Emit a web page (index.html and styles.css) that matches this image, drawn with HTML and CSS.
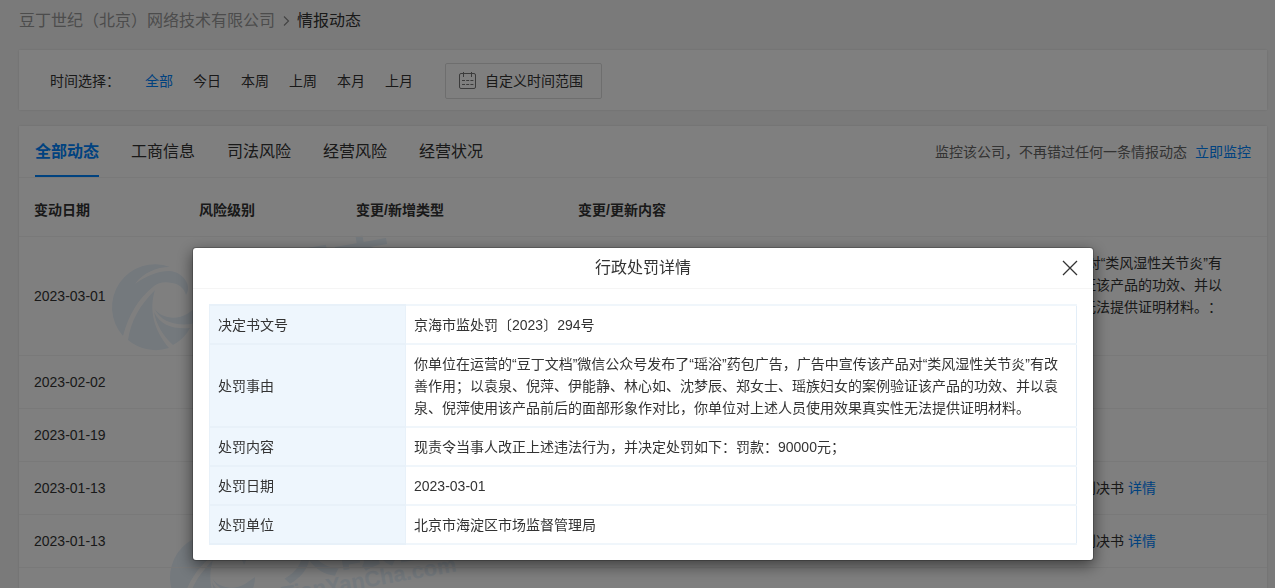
FILE: index.html
```
<!DOCTYPE html>
<html lang="zh-CN">
<head>
<meta charset="utf-8">
<title>情报动态</title>
<link rel="stylesheet" href="styles.css">
</head>
<body>
<main class="page">
  <nav class="crumbs">
    <a class="crumb-link" href="#">豆丁世纪（北京）网络技术有限公司</a>
    <svg class="crumb-sep" width="8" height="12" viewBox="0 0 8 12"><path d="M2 1.5 6.5 6 2 10.5" fill="none" stroke="currentColor" stroke-width="1.2"/></svg>
    <span>情报动态</span>
  </nav>

  <section class="card filter">
    <span class="filter-label">时间选择：</span>
    <div class="filter-options">
      <a class="option active" href="#">全部</a>
      <a class="option" href="#">今日</a>
      <a class="option" href="#">本周</a>
      <a class="option" href="#">上周</a>
      <a class="option" href="#">本月</a>
      <a class="option" href="#">上月</a>
    </div>
    <button class="range" type="button">
      <svg width="18" height="18" viewBox="0 0 18 18" fill="none" stroke="#777" stroke-width="1">
        <rect x="0.5" y="1.5" width="16" height="15" rx="1.5"/>
        <path d="M4.500 0V5M12.500 0V5"/>
        <path d="M3 8.500H14.500M3 12.500H14.500" stroke-dasharray="3 1.2"/>
      </svg>
      <span>自定义时间范围</span>
    </button>
  </section>

  <section class="card news">
    <header class="tabbar">
      <div class="tabs">
        <button class="tab active" type="button">全部动态</button>
        <button class="tab" type="button">工商信息</button>
        <button class="tab" type="button">司法风险</button>
        <button class="tab" type="button">经营风险</button>
        <button class="tab" type="button">经营状况</button>
      </div>
      <p class="monitor">监控该公司，不再错过任何一条情报动态<a class="link" href="#">立即监控</a></p>
    </header>

    <div class="table-wrap">
      <svg class="watermark" width="500" height="460" aria-hidden="true">
        <defs>
          <g id="mark">
            <path d="M12 72A43 43 0 0 1 59 3C45 3 32 9 24 20C36 11 48 7 58 7C66 7 73 12 76 19C78 24 77 28 75 31C73 24 68 20 61 19C53 17 47 19 43 22C27 35 18 50 12 72Z"/>
            <path d="M17 76C20 57 28 42 44 26C38 45 42 65 58 84A43 43 0 0 1 17 76Z"/>
            <path d="M43 48C50 62 62 65 79 64C75 72 69 77 62 81C52 72 45 60 43 48Z"/>
            <path d="M43 44C50 55 66 56 76 50L86 43C86 50 84 56 81 60C64 62 50 58 43 44Z"/>
            <g transform="translate(114 46) rotate(-10)">
              <text class="mark-name">天眼查</text>
            </g>
            <g transform="translate(114 68) rotate(-10)">
              <text class="mark-site">TianYanCha.com</text>
            </g>
          </g>
        </defs>
        <g class="mark-fill">
          <use href="#mark" x="92" y="86"/>
          <use href="#mark" x="150" y="356"/>
        </g>
      </svg>
      <table class="records">
        <colgroup><col class="c-date"><col class="c-level"><col class="c-type"><col></colgroup>
        <thead>
          <tr><th>变动日期</th><th>风险级别</th><th>变更/新增类型</th><th>变更/更新内容</th></tr>
        </thead>
        <tbody>
          <tr><td>2023-03-01</td><td></td><td></td><td>：你单位在运营的“豆丁文档”微信公众号发布了“瑶浴”药包广告，广告中宣传该产品对“类风湿性关节炎”有改善作用；以袁泉、倪萍、伊能静、林心如、沈梦辰、郑女士、瑶族妇女的案例验证该产品的功效、并以袁泉、倪萍使用该产品前后的面部形象作对比，你单位对上述人员使用效果真实性无法提供证明材料。：<br><a class="link" href="#">详情</a></td></tr>
          <tr><td>2023-02-02</td><td></td><td></td><td></td></tr>
          <tr><td>2023-01-19</td><td></td><td></td><td></td></tr>
          <tr><td>2023-01-13</td><td></td><td></td><td>该公司因侵害作品信息网络传播权纠纷，新增法律诉讼信息，文书类型为：民事类判决书 <a class="link" href="#">详情</a></td></tr>
          <tr><td>2023-01-13</td><td></td><td></td><td>该公司因侵害作品信息网络传播权纠纷，新增法律诉讼信息，文书类型为：民事类判决书 <a class="link" href="#">详情</a></td></tr>
          <tr><td></td><td></td><td></td><td></td></tr>
        </tbody>
      </table>
    </div>
  </section>
</main>

<div class="overlay">
  <div class="modal" role="dialog" aria-labelledby="modal-title">
    <header class="modal-head">
      <h2 class="modal-title" id="modal-title">行政处罚详情</h2>
      <button class="close" type="button" aria-label="关闭">
        <svg width="16" height="16" viewBox="0 0 16 16"><path d="M1 1 15 15M15 1 1 15" stroke="#333" stroke-width="1.3"/></svg>
      </button>
    </header>
    <div class="modal-body">
      <table class="detail">
        <tbody>
          <tr><th scope="row">决定书文号</th><td>京海市监处罚〔2023〕294号</td></tr>
          <tr><th scope="row">处罚事由</th><td>你单位在运营的“豆丁文档”微信公众号发布了“瑶浴”药包广告，广告中宣传该产品对“类风湿性关节炎”有改善作用；以袁泉、倪萍、伊能静、林心如、沈梦辰、郑女士、瑶族妇女的案例验证该产品的功效、并以袁泉、倪萍使用该产品前后的面部形象作对比，你单位对上述人员使用效果真实性无法提供证明材料。</td></tr>
          <tr><th scope="row">处罚内容</th><td>现责令当事人改正上述违法行为，并决定处罚如下：罚款：90000元；</td></tr>
          <tr><th scope="row">处罚日期</th><td>2023-03-01</td></tr>
          <tr><th scope="row">处罚单位</th><td>北京市海淀区市场监督管理局</td></tr>
        </tbody>
      </table>
    </div>
  </div>
</div>
</body>
</html>
```
FILE: styles.css
```
* { box-sizing: border-box; }

body {
  margin: 0;
  height: 100vh;
  overflow: hidden;
  background: #f5f5f5;
  color: #333;
  font: 14px/22px "Liberation Sans", "Noto Sans CJK SC", sans-serif;
  text-spacing-trim: space-all;
}

a { color: inherit; text-decoration: none; }
button { padding: 0; border: 0; background: none; color: inherit; font: inherit; cursor: pointer; }
.link { color: #0084ff; }

.page { padding: 9px 8px 0 19px; }

.crumbs { display: flex; align-items: center; height: 24px; font-size: 16px; line-height: 24px; }
.crumb-link { color: #999; }
.crumb-sep { margin: 0 7px; color: #888; }

.card { background: #fff; box-shadow: 0 0 2px rgba(0, 0, 0, .12); }

.filter { display: flex; align-items: center; height: 60px; margin-top: 17px; padding: 2px 31px 0; }
.filter-label { width: 95px; }
.filter-options { display: flex; gap: 20px; }
.option.active { color: #0084ff; }
.range {
  display: flex;
  align-items: center;
  gap: 8px;
  height: 36px;
  margin-left: 32px;
  padding: 0 18px 0 13px;
  border: 1px solid #ddd;
  border-radius: 2px;
}

.news { margin-top: 16px; }
.tabbar {
  display: flex;
  justify-content: space-between;
  height: 52px;
  padding: 0 16px;
  border-bottom: 1px solid #f2f2f2;
}
.tabs { display: flex; gap: 32px; }
.tab { height: 51px; padding-top: 2px; border-bottom: 2px solid transparent; font-size: 16px; }
.tab.active { border-color: #0084ff; color: #0084ff; font-weight: bold; }
.monitor { margin: 0; color: #666; line-height: 52px; }
.monitor .link { margin-left: 8px; }

.table-wrap { position: relative; overflow: hidden; }
.watermark { position: absolute; top: 0; left: 0; }
.mark-fill { fill: #e8f2fb; }
.mark-name { font: bold 58px "Noto Sans CJK SC", sans-serif; }
.mark-site { font: bold 22px "Liberation Sans", sans-serif; }

.records { position: relative; width: 100%; table-layout: fixed; border-collapse: separate; border-spacing: 0; }
.c-date { width: 165px; }
.c-level { width: 157px; }
.c-type { width: 222px; }
.records th, .records td { padding: 15px; border-bottom: 1px solid #f2f2f2; text-align: left; }
.records th { padding-top: 21px; }
.records td { height: 53px; }
.records td:last-child { padding-right: 36px; }

.overlay {
  position: fixed;
  inset: 0;
  display: flex;
  align-items: flex-start;
  justify-content: center;
  padding: 247px 0 0 11px;
  background: rgba(0, 0, 0, .5);
}
.modal {
  width: 902px;
  border: 1px solid rgba(0, 0, 0, .2);
  border-radius: 4px;
  background: #fff;
  background-clip: padding-box;
  box-shadow: 0 5px 15px rgba(0, 0, 0, .5);
}
.modal-head {
  display: grid;
  grid-template-columns: 32px 1fr 32px;
  align-items: center;
  height: 41px;
  padding: 0 7px;
  border-bottom: 1px solid #f5f5f5;
}
.modal-title { grid-column: 2; margin: 0; font-size: 16px; font-weight: normal; text-align: center; }
.close { display: flex; justify-content: center; }
.modal-body { padding: 15px 16px; }

.detail { width: 100%; border-collapse: collapse; }
.detail th, .detail td {
  padding: 8px 8px 7px;
  border-top: 2px solid #f0f6fb;
  border-bottom: 2px solid #f0f6fb;
  border-left: 1px solid #e3eef8;
  border-right: 1px solid #e3eef8;
  text-align: left;
  font-weight: normal;
}
.detail th { width: 196px; border-color: #e8f1f9; background: #eef6fd; }
```
